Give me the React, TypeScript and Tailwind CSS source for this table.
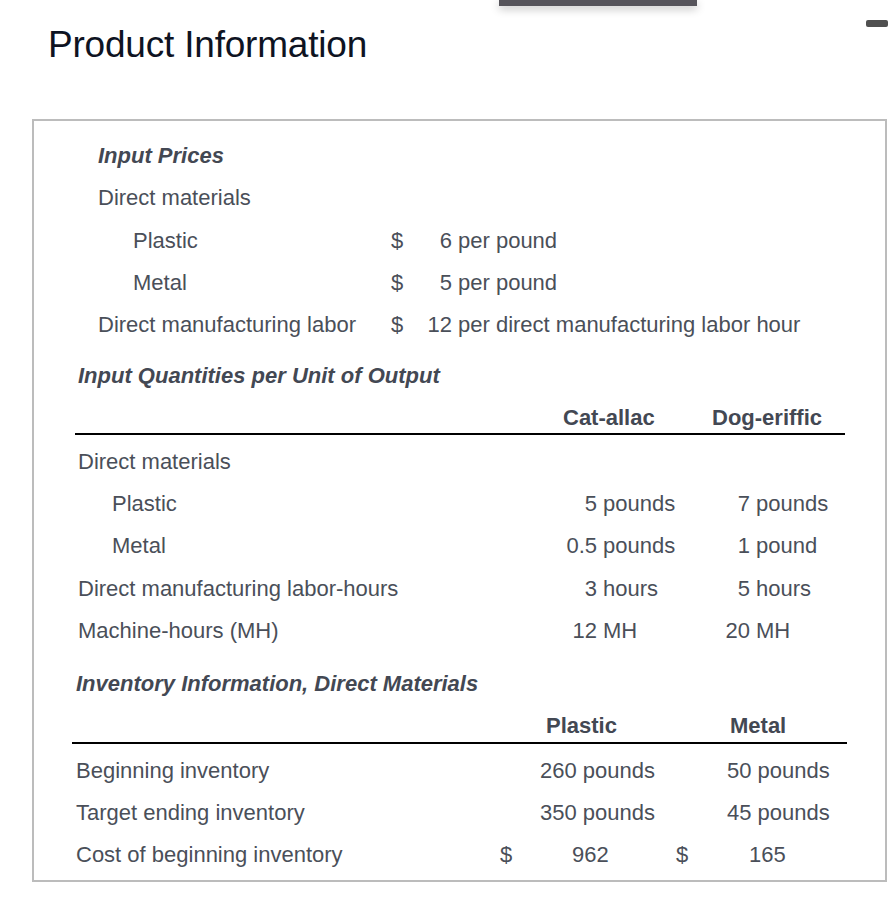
const body = "text-[22px] text-[#4a4f59]";

function PriceRow({ label, indent, amount, unit }: { label: string; indent?: boolean; amount: string; unit: string }) {
  return (
    <div className={`flex items-center h-[42px] ${body}`}>
      <div className={`w-[293px] ${indent ? "pl-[35px]" : ""}`}>{label}</div>
      <div className="w-[30px]">$</div>
      <div className="w-[31px] text-right">{amount}</div>
      <div className="pl-[6px] whitespace-nowrap">{unit}</div>
    </div>
  );
}

function QtyRow({ label, indent, a, au, b, bu, h = "h-[42px]" }: { label: string; indent?: boolean; a?: string; au?: string; b?: string; bu?: string; h?: string }) {
  return (
    <div className={`flex items-center ${h} ${body}`}>
      <div className={`w-[480px] ${indent ? "pl-[37px]" : "pl-[3px]"}`}>{label}</div>
      <div className="w-[42px] text-right">{a}</div>
      <div className="w-[103px] pl-[6px]">{au}</div>
      <div className="w-[50px] text-right">{b}</div>
      <div className="pl-[6px] whitespace-nowrap">{bu}</div>
    </div>
  );
}

function InvRow({ label, d1, v1, d2, v2, p1 = "", p2 = "" }: { label: string; d1?: string; v1: string; d2?: string; v2: string; p1?: string; p2?: string }) {
  return (
    <div className={`flex items-center h-[42px] ${body}`}>
      <div className="w-[428px] pl-[4px]">{label}</div>
      <div className="w-[40px]">{d1}</div>
      <div className={`w-[136px] ${p1}`}>{v1}</div>
      <div className="w-[51px]">{d2}</div>
      <div className={`whitespace-nowrap ${p2}`}>{v2}</div>
    </div>
  );
}

export default function App() {
  return (
    <div
      className="relative w-[894px] h-[898px] bg-white overflow-hidden"
      style={{ fontFamily: '"Liberation Sans", Arial, sans-serif' }}
    >
      {/* overlay bits from the host page */}
      <div className="absolute left-[499px] top-0 w-[198px] h-[6px] bg-[#56545b] shadow-[0_3px_8px_rgba(0,0,0,0.25)]" />
      <div className="absolute left-[866px] top-[20px] w-[22px] h-[7px] rounded-[2px] bg-[#505050]" />

      <h1 className="pt-[24px] pl-[48px] text-[37px] leading-[42px] text-[#0e1322] tracking-[-0.2px]">
        Product Information
      </h1>

      <div className="mt-[53px] ml-[32px] w-[855px] h-[763px] border-2 border-[#bcbcbc] pt-[13px]">
        {/* Input prices */}
        <div className="pl-[64px]">
          <div className="flex items-center h-[42px] text-[22px] font-bold italic text-[#434853]">Input Prices</div>
          <div className={`flex items-center h-[43px] ${body}`}>Direct materials</div>
          <PriceRow label="Plastic" indent amount="6" unit="per pound" />
          <PriceRow label="Metal" indent amount="5" unit="per pound" />
          <PriceRow label="Direct manufacturing labor" amount="12" unit="per direct manufacturing labor hour" />
        </div>

        {/* Input quantities */}
        <div className="ml-[41px] mt-[9px] w-[770px]">
          <div className="flex items-center h-[42px] pl-[3px] text-[22px] font-bold italic text-[#434853]">
            Input Quantities per Unit of Output
          </div>
          <div className="flex items-end h-[39px] pb-[3px] border-b-2 border-black text-[22px] leading-[25px] font-bold text-[#434853]">
            <div className="w-[488px]" />
            <div className="w-[149px]">Cat-allac</div>
            <div>Dog-eriffic</div>
          </div>
          <div className="h-[5px]" />
          <QtyRow label="Direct materials" />
          <QtyRow label="Plastic" indent a="5" au="pounds" b="7" bu="pounds" />
          <QtyRow label="Metal" indent a="0.5" au="pounds" b="1" bu="pound" h="h-[43px]" />
          <QtyRow label="Direct manufacturing labor-hours" a="3" au="hours" b="5" bu="hours" />
          <QtyRow label="Machine-hours (MH)" a="12" au="MH" b="20" bu="MH" h="h-[43px]" />
        </div>

        {/* Inventory */}
        <div className="ml-[38px] mt-[10px] w-[775px]">
          <div className="flex items-center h-[42px] pl-[4px] text-[22px] font-bold italic text-[#434853]">
            Inventory Information, Direct Materials
          </div>
          <div className="flex items-end h-[40px] pb-[4px] border-b-2 border-black text-[22px] leading-[25px] font-bold text-[#434853]">
            <div className="w-[474px]" />
            <div className="w-[184px]">Plastic</div>
            <div>Metal</div>
          </div>
          <div className="h-[5px]" />
          <InvRow label="Beginning inventory" v1="260 pounds" v2="50 pounds" />
          <InvRow label="Target ending inventory" v1="350 pounds" v2="45 pounds" />
          <InvRow label="Cost of beginning inventory" d1="$" v1="962" d2="$" v2="165" p1="pl-[32px]" p2="pl-[22px]" />
        </div>
      </div>
    </div>
  );
}
